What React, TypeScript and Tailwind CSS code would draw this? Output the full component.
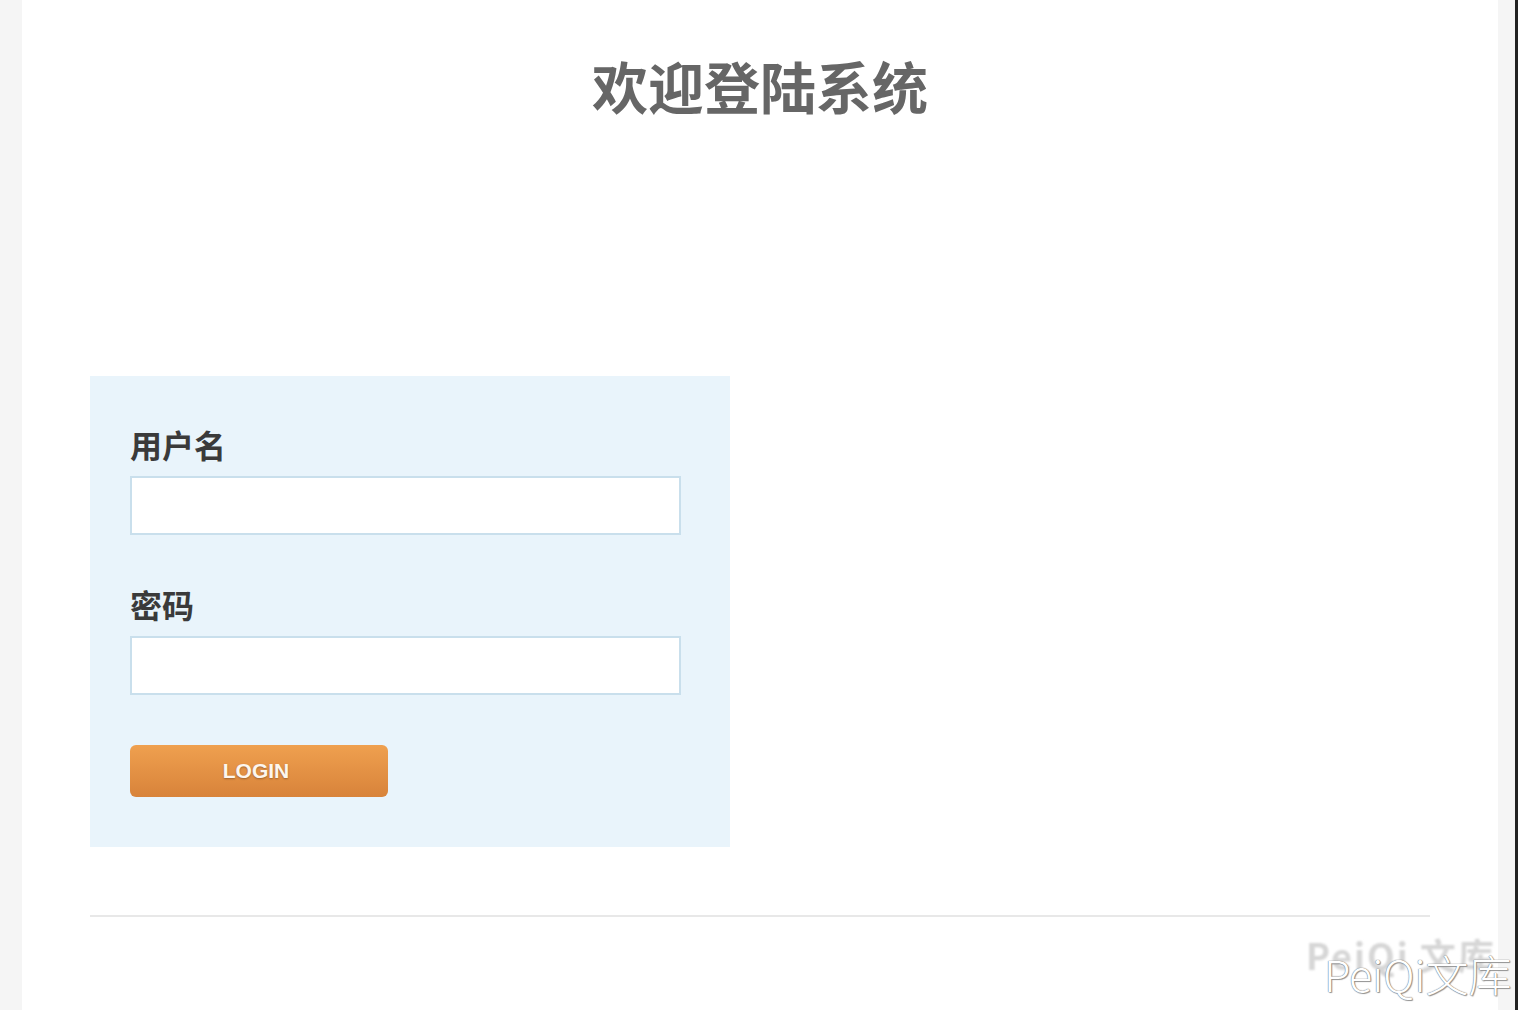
import React from 'react';

const LoginPage: React.FC = () => {
  return (
    <div className="relative flex h-[1010px] w-full overflow-hidden bg-[#f5f5f5] font-['Noto_Sans_CJK_SC',sans-serif]">
      <div className="w-[22px] shrink-0 bg-[#f5f5f5]"></div>
      <main className="flex w-[1476px] shrink-0 flex-col bg-white px-[68px]">
        <h1 className="pt-[57px] text-center text-[56px] leading-[56px] font-bold text-[#666666]">
          欢迎登陆系统
        </h1>

        <form className="mt-[263px] w-[640px] bg-[#e9f4fb] px-[40px] pt-[52px] pb-[50px]">
          <label className="mb-[16px] block text-[32px] leading-[32px] font-bold text-[#3a3a3a]">
            用户名
          </label>
          <input
            type="text"
            className="block h-[59px] w-[551px] border-2 border-[#c9dfec] bg-white outline-none"
          />

          <label className="mt-[53px] mb-[16px] block text-[32px] leading-[32px] font-bold text-[#3a3a3a]">
            密码
          </label>
          <input
            type="password"
            className="block h-[59px] w-[551px] border-2 border-[#c9dfec] bg-white outline-none"
          />

          <button
            type="button"
            className="mt-[50px] block h-[52px] w-[258px] rounded-[6px] bg-gradient-to-b from-[#efa04f] to-[#d8833a] pr-[6px] font-['Liberation_Sans',sans-serif] text-[21px] font-bold text-[#fdf6ee] [text-shadow:0_1px_2px_rgba(0,0,0,0.3)]"
          >
            LOGIN
          </button>
        </form>

        <div className="mt-[68px] h-[2px] w-full bg-[#e8e8e8]"></div>
      </main>
      <div className="w-[17px] shrink-0 bg-[#f5f5f5]"></div>
      <div className="w-[3px] shrink-0 bg-[#222222]"></div>

      <div className="pointer-events-none absolute top-[932px] left-[1306px] text-[36px] leading-[44px] font-bold tracking-[2px] whitespace-nowrap text-[#d6d6d6] blur-[1px]">
        PeiQi 文库
      </div>
      <div className="pointer-events-none absolute top-[947px] left-[1324px] text-[43px] leading-[52px] font-light whitespace-nowrap text-white [text-shadow:0_0_1px_#777,0_0_1px_#777,1px_1px_1px_#999]">
        PeiQi文库
      </div>
    </div>
  );
};

export default function App() {
  return <LoginPage />;
}
